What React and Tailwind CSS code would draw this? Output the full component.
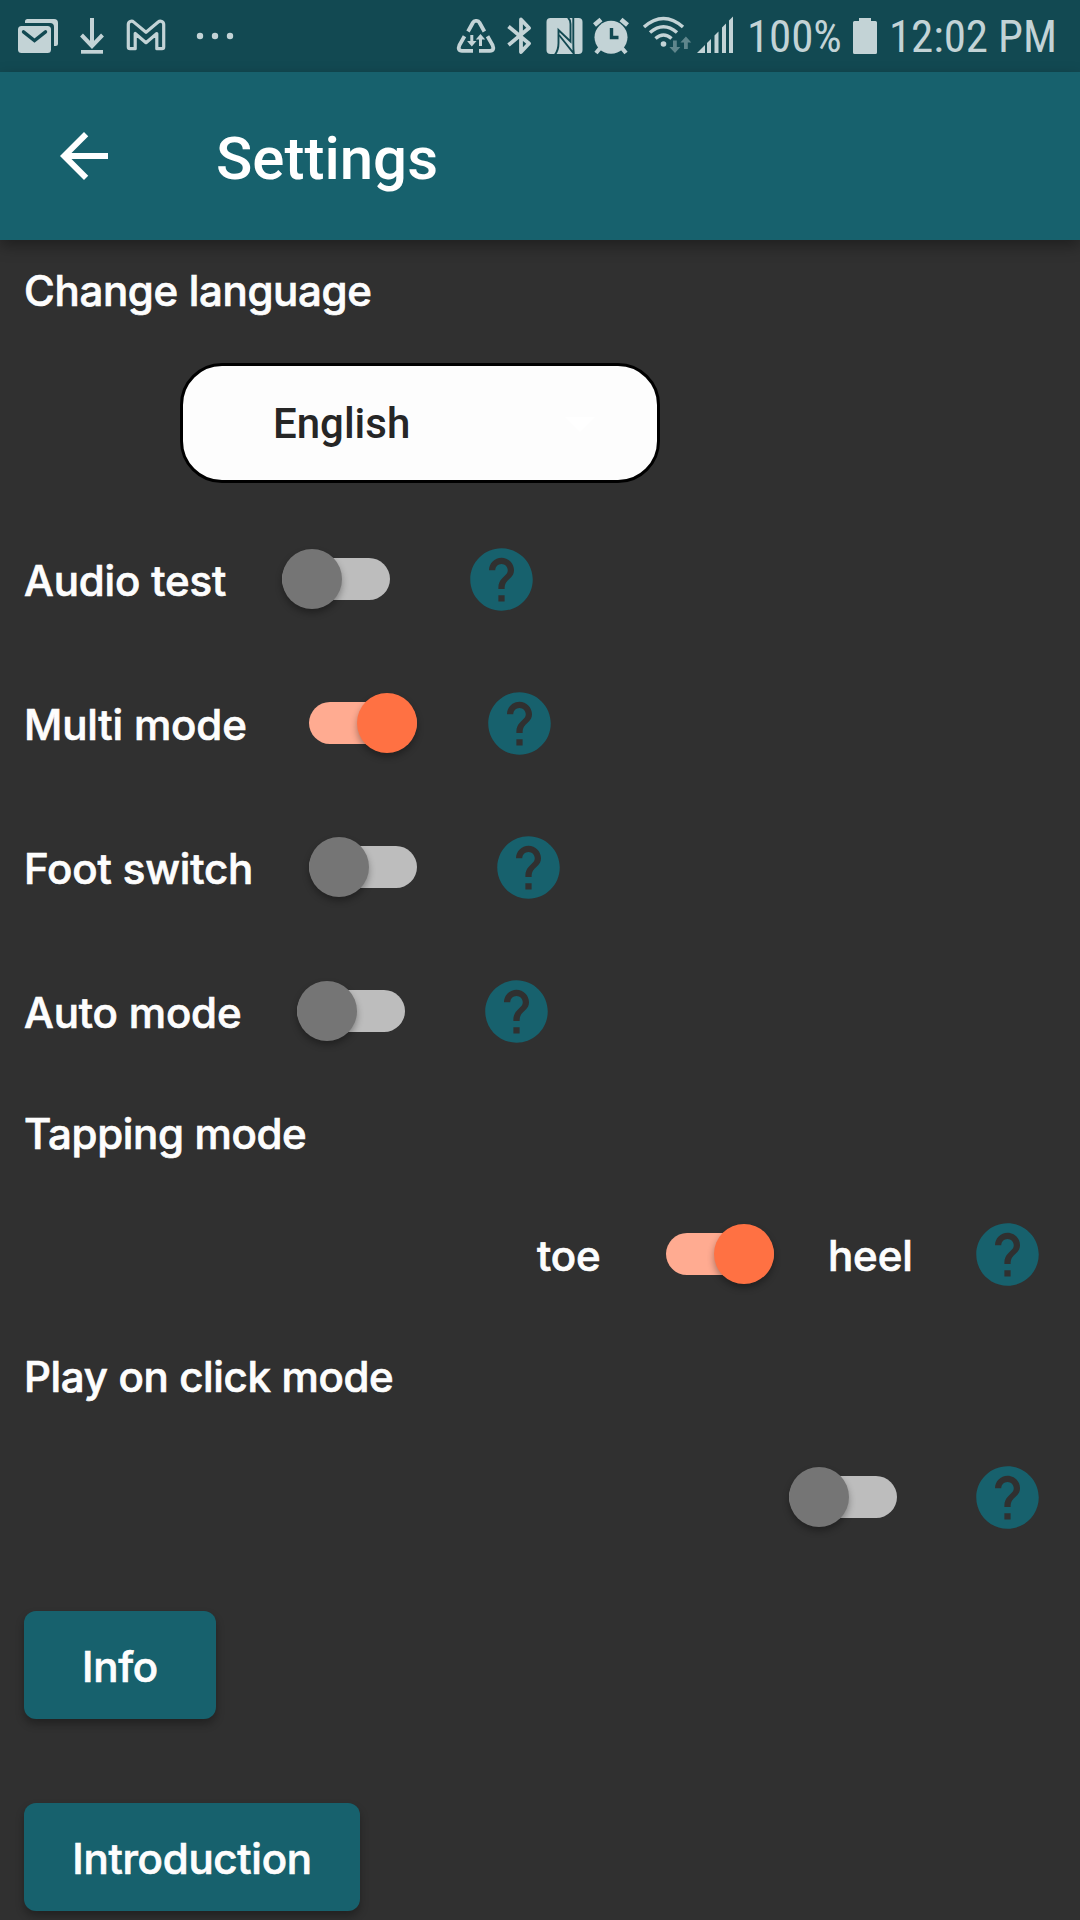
import React from 'react';
import { MdArrowBack, MdArrowDropDown, MdHelp } from 'react-icons/md';

const LABEL =
  "font-['Inter',sans-serif] text-[42px] font-medium whitespace-nowrap text-[#fdfdfd] [-webkit-text-stroke:0.7px_#fdfdfd]";

function Glyph({ viewBox, className, children }) {
  return (
    <svg viewBox={viewBox} className={`h-[72px] shrink-0 ${className}`} fill="currentColor" aria-hidden="true">
      {children}
    </svg>
  );
}

function StatusBar() {
  return (
    <div className="flex h-[72px] items-center bg-[#124952] text-[#c3d3d6]">
      <Glyph viewBox="0 0 70 72" className="w-[70px]">
        <path d="M25 23v-1.500q0-2.500 2.500-2.500H54q4 0 4 4v20.500q0 2.500-2.500 2.500H54V27q0-4-4-4z" />
        <rect x="18" y="26" width="33" height="27" rx="3.500" />
        <path d="M23.500 31.800 34.500 40.500 45.500 31.800" fill="none" stroke="#124952" strokeWidth="3.400" strokeLinecap="round" />
      </Glyph>
      <Glyph viewBox="70 0 45 72" className="w-[45px]">
        <path d="M92 18v29M81.500 35 92 46l10.500-11" fill="none" stroke="currentColor" strokeWidth="4" />
        <rect x="81" y="50" width="22" height="3.700" />
      </Glyph>
      <Glyph viewBox="115 0 65 72" className="w-[65px]">
        <path
          d="M128.300 47V24.500c0-3 3.400-4.200 5.500-2.400L146 32.300l12.200-10.200c2.100-1.800 5.500-.600 5.500 2.400V47q0 1.700-1.700 1.700h-5.200V33.500L146 42.700l-10.800-9.200v15.200H130q-1.700 0-1.700-1.700z"
          fill="none"
          stroke="currentColor"
          strokeWidth="3.200"
          strokeLinejoin="round"
        />
      </Glyph>
      <Glyph viewBox="180 0 70 72" className="w-[70px]">
        <circle cx="200" cy="36" r="3.200" />
        <circle cx="215" cy="36" r="3.200" />
        <circle cx="230" cy="36" r="3.200" />
      </Glyph>

      <Glyph viewBox="450 0 52 72" className="ml-auto w-[52px]">
        <g fill="none" stroke="currentColor" strokeWidth="3.800">
          <path d="M468 31.500l5-9q.800-1.600 2.500-1.600h1.400q1.700 0 2.500 1.600l5 9" />
          <path d="M464.500 36.300l-5 8.700q-2.300 5.800 2.500 5.800h11" />
          <path d="M487.500 36.300l5 8.700q2.300 5.800-2.500 5.800h-11" />
        </g>
        <path d="M470.300 35h3v6h3.200l-4.700 5.500-4.700-5.500h3.200zM479 46h3v-6.500h3.200l-4.700-5.500-4.700 5.500h3.200z" />
      </Glyph>
      <Glyph viewBox="502 0 36 72" className="w-[36px]">
        <path d="M508.500 26.500 529 43.500 521 52V19.500L529 28 508.500 45" fill="none" stroke="currentColor" strokeWidth="3.800" strokeLinejoin="round" />
      </Glyph>
      <Glyph viewBox="538 0 50 72" className="w-[50px]">
        <rect x="546.500" y="18" width="36" height="36" rx="4" />
        <g fill="none" stroke="#124952" strokeWidth="1.900">
          <path d="M555 54.500Q558.500 50 558.500 43V30l12 11.500V24q0-4-2.500-6.500" />
          <path d="M559 35l14.800 18.500q-.500-4-.500-10.500V17.500" />
        </g>
      </Glyph>
      <Glyph viewBox="588 0 48 72" className="w-[48px]">
        <circle cx="611" cy="37.300" r="16.500" />
        <path d="M594.500 25l6.500-5.500M627.500 25l-6.500-5.500" fill="none" stroke="currentColor" strokeWidth="4.600" />
        <path d="M601 47l-5 6M621 47l5 6" fill="none" stroke="currentColor" strokeWidth="4.200" />
        <path d="M611.500 28v9.500h7" fill="none" stroke="#124952" strokeWidth="3.400" />
      </Glyph>
      <Glyph viewBox="636 0 57 72" className="w-[57px]">
        <g fill="none" stroke="currentColor" strokeWidth="3.500">
          <path d="M644 27q19.500-17 39 0" />
          <path d="M650 32.500q13.500-11.500 27 0" />
          <path d="M655.500 38.500q8-7 16 0" />
        </g>
        <circle cx="663.500" cy="44" r="2.800" />
        <g fill="#5f868c">
          <path d="M673 40.500h3.800v6.500h3.500L675 53l-5.600-6h3.600zM684 49h3.800v-6.500h3.500l-5.400-6-5.500 6h3.600z" />
        </g>
      </Glyph>
      <Glyph viewBox="693 0 47 72" className="w-[47px]">
        <path d="M697 53l8-8v8zM707 43l4-4v14h-4zM714.500 35.500l4-4V53h-4zM722 27.500l4-4V53h-4zM729 20.500l4-4V53h-4z" />
      </Glyph>
      <span className="w-[104px] pt-[2px] pl-[7px] font-['Roboto_Condensed','Roboto',sans-serif] text-[45px] leading-[72px] tracking-[-0.1px] whitespace-nowrap">
        100%
      </span>
      <Glyph viewBox="844 0 40 72" className="w-[40px]">
        <path d="M859 18h12v3h4.500q1.500 0 1.500 1.500v30q0 1.500-1.500 1.500h-21q-1.500 0-1.500-1.500v-30q0-1.500 1.500-1.500h4.500z" />
      </Glyph>
      <span className="w-[196px] pt-[2px] pl-[5px] font-['Roboto_Condensed','Roboto',sans-serif] text-[45px] leading-[72px] tracking-[-0.1px] whitespace-nowrap">
        12:02 PM
      </span>
    </div>
  );
}

function AppBar() {
  return (
    <header className="relative flex h-[168px] items-center bg-[#17616d] text-white shadow-[0_6px_14px_rgba(0,0,0,0.35)]">
      <button className="ml-12 flex size-[72px] items-center justify-center" aria-label="Back">
        <MdArrowBack className="size-[72px]" />
      </button>
      <h1 className="ml-24 pt-[5px] font-['Roboto',sans-serif] text-[60px] leading-[70px] font-medium">Settings</h1>
    </header>
  );
}

function Switch({ on }) {
  return (
    <button role="switch" aria-checked={on} className="flex h-[60px] w-[108px] shrink-0 items-center">
      {on ? (
        <span className="flex h-[42px] w-[108px] items-center justify-end rounded-full bg-[#ffab91]">
          <span className="size-[60px] shrink-0 rounded-full bg-[#ff7143] shadow-[0_4px_7px_rgba(0,0,0,0.32)]" />
        </span>
      ) : (
        <span className="flex h-[42px] w-[108px] items-center rounded-full bg-[#bdbdbd]">
          <span className="size-[60px] shrink-0 rounded-full bg-[#757575] shadow-[0_4px_7px_rgba(0,0,0,0.32)]" />
        </span>
      )}
    </button>
  );
}

function Help({ className }) {
  return (
    <button className={`shrink-0 ${className || ''}`} aria-label="Help">
      <MdHelp className="size-[75px] text-[#17616d]" />
    </button>
  );
}

const ROWS = [
  { label: 'Audio test', on: false, labelWidth: 'w-[258px]', helpGap: 'ml-[73.500px]' },
  { label: 'Multi mode', on: true, labelWidth: 'w-[285px]', helpGap: 'ml-[64.500px]' },
  { label: 'Foot switch', on: false, labelWidth: 'w-[285px]', helpGap: 'ml-[73.500px]' },
  { label: 'Auto mode', on: false, labelWidth: 'w-[273px]', helpGap: 'ml-[73.500px]' },
];

function Heading({ className, children }) {
  return <h2 className={`${LABEL} flex items-center pb-[2px] tracking-[-0.34px] ${className}`}>{children}</h2>;
}

function ActionButton({ className, children }) {
  return (
    <button
      className={`${LABEL} flex h-[108px] items-center justify-center rounded-[12px] bg-[#17616d] pt-[2px] tracking-[-0.28px] shadow-[0_5px_8px_rgba(0,0,0,0.3)] ${className}`}
    >
      {children}
    </button>
  );
}

export default function App() {
  return (
    <div className="flex h-[1920px] w-[1080px] flex-col overflow-hidden bg-[#303030]">
      <StatusBar />
      <AppBar />
      <main className="flex flex-col px-6">
        <Heading className="h-[102px]">Change language</Heading>

        <button className="mt-[21px] ml-[156px] flex h-[120px] w-[480px] items-center justify-between rounded-[42px] border-[3px] border-black bg-[#fdfdfd] pr-[41px] pl-[90px]">
          <span className="font-['Roboto',sans-serif] text-[42px] font-medium text-[#262626]">English</span>
          <MdArrowDropDown className="size-[72px] text-white" />
        </button>

        <div className="mt-6 flex flex-col">
          {ROWS.map((row) => (
            <div key={row.label} className="flex h-[144px] items-center">
              <span className={`${LABEL} shrink-0 pt-[2px] tracking-[-0.15px] ${row.labelWidth}`}>{row.label}</span>
              <Switch on={row.on} />
              <Help className={row.helpGap} />
            </div>
          ))}
        </div>

        <Heading className="h-[102px]">Tapping mode</Heading>
        <div className="flex h-[138px] items-center justify-end pr-[11px]">
          <span className={`${LABEL} w-[129px] pt-[2px] tracking-[-0.15px]`}>toe</span>
          <Switch on />
          <span className={`${LABEL} ml-[54px] w-[142px] pt-[2px] tracking-[-0.15px]`}>heel</span>
          <Help />
        </div>

        <Heading className="h-[108px]">Play on click mode</Heading>
        <div className="flex h-[132px] items-center justify-end pr-[11px]">
          <Switch on={false} />
          <Help className="ml-[73px]" />
        </div>

        <ActionButton className="mt-12 w-[192px]">Info</ActionButton>
        <ActionButton className="mt-[84px] w-[336px]">Introduction</ActionButton>
      </main>
    </div>
  );
}
